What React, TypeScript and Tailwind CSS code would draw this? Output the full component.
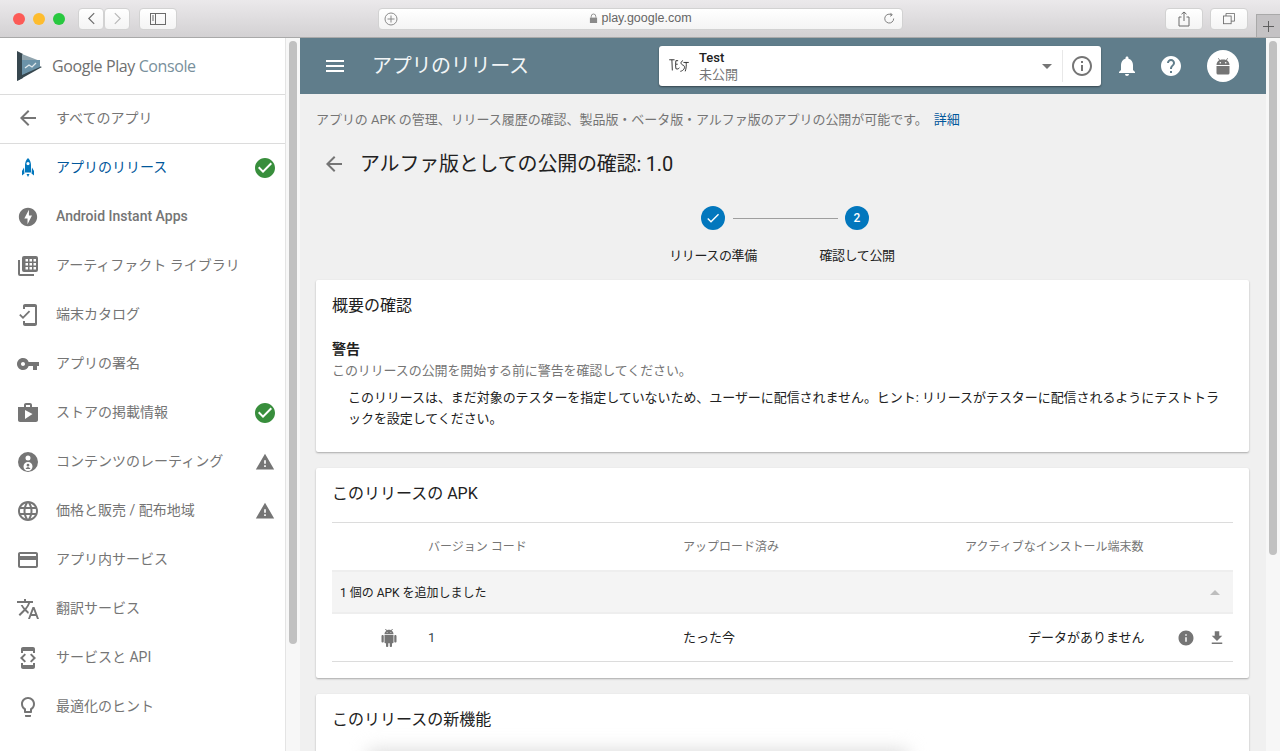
import {
  MdArrowBack,
  MdArrowDropDown,
  MdArrowDropUp,
  MdCheck,
  MdCheckCircle,
  MdCreditCard,
  MdDeveloperMode,
  MdFileDownload,
  MdHelp,
  MdInfo,
  MdInfoOutline,
  MdLanguage,
  MdLightbulbOutline,
  MdMenu,
  MdMobileFriendly,
  MdNotifications,
  MdOfflineBolt,
  MdShop,
  MdTranslate,
  MdVpnKey,
  MdWarning,
} from "react-icons/md";

const font = "font-['Roboto','Noto_Sans_CJK_JP',sans-serif]";

function RocketIcon() {
  return (
    <svg viewBox="0 0 24 24" className="w-6 h-6" fill="#0277bd">
      <path d="M12 2c-2 2-3 4.5-3 7v7.5h6V9c0-2.500-1-5-3-7zm0 7.200a1.600 1.600 0 110-3.200 1.600 1.600 0 010 3.200z" />
      <path d="M8 11.500l-2 3.500v4.500l2.500-2zM16 11.500l2 3.500v4.500l-2.500-2zM10.500 18h3l-1.500 3z" />
    </svg>
  );
}

function LibraryIcon() {
  return (
    <svg viewBox="0 0 24 24" className="w-6 h-6" fill="#757575">
      <path d="M2 6h2v14h14v2H4a2 2 0 01-2-2z" />
      <path d="M8 2h12a2 2 0 012 2v12a2 2 0 01-2 2H8a2 2 0 01-2-2V4a2 2 0 012-2zm1.500 3v2.500H12V5zm4 0v2.500H16V5zm4 0v2.500H20V5zm-8 4v2.500H12V9zm4 0v2.500H16V9zm4 0v2.500H20V9zm-8 4v2.500H12V13zm4 0v2.500H16V13zm4 0v2.500H20V13z" fillRule="evenodd" />
    </svg>
  );
}

function RatingIcon() {
  return (
    <svg viewBox="0 0 24 24" className="w-6 h-6" fill="#757575">
      <path
        fillRule="evenodd"
        d="M12 2a10 10 0 100 20 10 10 0 000-20zm0 3.500a2.500 2.500 0 110 5 2.500 2.500 0 010-5zm0 6.500a4.500 4.500 0 110 9 4.500 4.500 0 010-9zm0 1.800a1.400 1.400 0 100 2.800 1.400 1.400 0 000-2.800zm-2.400 5.200h4.800c-.4-1.100-1.300-1.700-2.400-1.700s-2 .6-2.400 1.700z"
      />
    </svg>
  );
}

function AndroidFull({ className }: { className: string }) {
  return (
    <svg viewBox="0 0 24 24" className={className} fill="#757575">
      <path d="M6 18c0 .55.45 1 1 1h1v3.500c0 .83.67 1.500 1.500 1.500s1.500-.67 1.500-1.500V19h2v3.500c0 .83.67 1.500 1.500 1.500s1.500-.67 1.500-1.500V19h1c.55 0 1-.45 1-1V8H6v10zM3.500 8C2.670 8 2 8.670 2 9.500v7c0 .83.67 1.500 1.500 1.500S5 17.330 5 16.500v-7C5 8.670 4.330 8 3.500 8zm17 0c-.83 0-1.500.67-1.500 1.500v7c0 .83.67 1.500 1.500 1.500s1.500-.67 1.500-1.500v-7c0-.83-.67-1.500-1.500-1.500zm-4.970-5.840l1.300-1.300c.2-.2.2-.51 0-.71-.2-.2-.51-.2-.71 0l-1.480 1.480C13.850 1.230 12.950 1 12 1c-.96 0-1.860.23-2.660.63L7.850.15c-.2-.2-.51-.2-.71 0-.2.2-.2.51 0 .71l1.310 1.310C6.970 3.260 6 5.010 6 7h12c0-1.990-.97-3.750-2.470-4.840zM10 5H9V4h1v1zm5 0h-1V4h1v1z" />
    </svg>
  );
}

function AvatarRobot() {
  return (
    <svg viewBox="0 0 20 20" className="w-5 h-5" fill="#757575">
      <path d="M3.500 9c0-2.200 1.100-3.900 2.700-4.800L4.900 2.300l.6-.4 1.500 2c.9-.4 2-.4 3-.4s2.100 0 3 .4l1.500-2 .6.400-1.300 1.900C15.400 5.100 16.500 6.800 16.500 9z" />
      <path d="M3.500 10h13v7a1.500 1.500 0 01-1.500 1.500H5A1.500 1.500 0 013.500 17z" />
      <circle cx="7.300" cy="6.800" r="0.800" fill="#fff" />
      <circle cx="12.700" cy="6.800" r="0.800" fill="#fff" />
    </svg>
  );
}

function PlayConsoleLogo() {
  return (
    <svg viewBox="0 0 28 30" className="w-7 h-[30px]">
      <path d="M0 0l6 3v24l-6 3z" fill="#37474f" />
      <path d="M0 30l25-14-3-1-16 8z" fill="#37474f" />
      <path d="M5 3l18 7v0H5z" fill="#90a4ae" />
      <path d="M5 9h18v7l-18 8z" fill="#6b92a8" />
      <path d="M8 17l4-3 3 2 4-4" fill="none" stroke="#dfe7eb" strokeWidth="1.300" />
    </svg>
  );
}

type NavItem = {
  label: string;
  icon: React.ReactNode;
  status?: "ok" | "warn";
  active?: boolean;
};

const iconClass = "w-6 h-6 text-[#757575]";

const navItems: NavItem[] = [
  { label: "アプリのリリース", icon: <RocketIcon />, status: "ok", active: true },
  { label: "Android Instant Apps", icon: <MdOfflineBolt className="w-[22px] h-[22px] text-[#757575]" /> },
  { label: "アーティファクト ライブラリ", icon: <LibraryIcon /> },
  { label: "端末カタログ", icon: <MdMobileFriendly className={iconClass} /> },
  { label: "アプリの署名", icon: <MdVpnKey className={iconClass} /> },
  { label: "ストアの掲載情報", icon: <MdShop className={iconClass} />, status: "ok" },
  { label: "コンテンツのレーティング", icon: <RatingIcon />, status: "warn" },
  { label: "価格と販売 / 配布地域", icon: <MdLanguage className={iconClass} />, status: "warn" },
  { label: "アプリ内サービス", icon: <MdCreditCard className={iconClass} /> },
  { label: "翻訳サービス", icon: <MdTranslate className={iconClass} /> },
  { label: "サービスと API", icon: <MdDeveloperMode className={iconClass} /> },
  { label: "最適化のヒント", icon: <MdLightbulbOutline className={iconClass} /> },
];

function Sidebar() {
  return (
    <aside className="w-[300px] shrink-0 flex bg-white">
      <div className="w-[285px] shrink-0 border-r border-[#e4e4e4] box-content">
        <div className="h-[57px] flex items-center pl-[17px] border-b border-[#dcdcdc]">
          <PlayConsoleLogo />
          <span className="ml-[7px] text-[16px] tracking-[-0.4px] text-[#6f6f6f] font-['Open_Sans',sans-serif]">
            Google Play <span className="text-[#78909c]">Console</span>
          </span>
        </div>
        <div className="h-[49px] flex items-center pl-4 pb-[2px] border-b border-[#dcdcdc]">
          <MdArrowBack className="w-6 h-6 text-[#757575]" />
          <span className="ml-4 text-[14px] text-[#757575]">すべてのアプリ</span>
        </div>
        <div className="-mt-px">
          {navItems.map((item) => (
            <div key={item.label} className="h-[49px] flex items-center pl-4 pr-[8px]">
              <span className="w-6 h-6 flex items-center justify-center">{item.icon}</span>
              <span
                className={`ml-4 flex-1 text-[14px] ${
                  item.active ? "text-[#01579b]" : "text-[#757575]"
                } ${item.label.startsWith("Android") ? "font-medium" : ""}`}
              >
                {item.label}
              </span>
              {item.status === "ok" && <MdCheckCircle className="w-6 h-6 text-[#388e3c]" />}
              {item.status === "warn" && <MdWarning className="w-[20px] h-[20px] mx-[2px] text-[#757575]" />}
            </div>
          ))}
        </div>
      </div>
      <Scrollbar thumb="h-[603px]" />
    </aside>
  );
}

function Scrollbar({ thumb }: { thumb: string }) {
  return (
    <div className="flex-1 bg-[#f7f7f7] pt-[3px] flex justify-center">
      <div className={`w-2 rounded bg-[#c1c1c1] ${thumb}`} />
    </div>
  );
}

function SafariBar() {
  const btn = "h-[22px] rounded-[4px] bg-gradient-to-b from-white to-[#f4f4f4] border border-[#d2d2d2] flex items-center justify-center text-[#666]";
  return (
    <div className="h-[38px] shrink-0 relative flex items-center pl-[13px] bg-gradient-to-b from-[#ebe9eb] to-[#d3d1d3] border-b border-[#a9a9a9]">
      <span className="w-3 h-3 rounded-full bg-[#fc5b57]" />
      <span className="w-3 h-3 rounded-full bg-[#fdbc2e] ml-2" />
      <span className="w-3 h-3 rounded-full bg-[#28c83f] ml-2" />
      <div className={`${btn} ml-[13px] w-[26px]`}>
        <svg viewBox="0 0 10 14" className="w-[9px] h-[13px]" fill="none" stroke="#6b6b6b" strokeWidth="1.300">
          <path d="M8 1L2 7l6 6" />
        </svg>
      </div>
      <div className={`${btn} w-[26px]`}>
        <svg viewBox="0 0 10 14" className="w-[9px] h-[13px]" fill="none" stroke="#b8b8b8" strokeWidth="1.300">
          <path d="M2 1l6 6-6 6" />
        </svg>
      </div>
      <div className={`${btn} ml-[9px] w-[38px]`}>
        <svg viewBox="0 0 16 12" className="w-4 h-3" fill="none" stroke="#6b6b6b">
          <rect x="0.500" y="0.500" width="15" height="11" />
          <path d="M5.500 0.500v11M2 3h2M2 5h2M2 7h2" />
        </svg>
      </div>
      <div className={`${btn} ml-[201px] w-[525px] relative text-[#2c2c2c] text-[12.500px] font-['Liberation_Sans',sans-serif]`}>
        <svg viewBox="0 0 14 14" className="absolute left-[5px] top-[3px] w-[14px] h-[14px]" fill="none" stroke="#8a8a8a">
          <circle cx="7" cy="7" r="6" />
          <path d="M7 3.500v7M3.500 7h7" />
        </svg>
        <svg viewBox="0 0 10 12" className="w-[9px] h-[11px] mr-[3px]" fill="#8a8a8a">
          <path d="M1 5h8v6H1z" />
          <path d="M2.500 5V3.500a2.500 2.500 0 015 0V5" fill="none" stroke="#8a8a8a" />
        </svg>
        play.google.com
        <svg viewBox="0 0 14 14" className="absolute right-[6px] top-[3px] w-[13px] h-[13px]" fill="none" stroke="#777">
          <path d="M11.500 7a4.800 4.800 0 11-2-3.800" />
          <path d="M8 1l2 2.200-2.400 1.400" />
        </svg>
      </div>
      <div className={`${btn} ml-[262px] w-[38px]`}>
        <svg viewBox="0 0 12 16" className="w-3 h-4" fill="none" stroke="#6b6b6b">
          <path d="M3.500 6H1v9h10V6H8.500M6 10V1M3.500 3.200L6 1l2.500 2.200" />
        </svg>
      </div>
      <div className={`${btn} ml-[7px] w-[38px]`}>
        <svg viewBox="0 0 14 14" className="w-3 h-3" fill="none" stroke="#6b6b6b">
          <rect x="0.500" y="3.500" width="9" height="9" />
          <path d="M3.500 3.500v-3h10v9h-4" />
        </svg>
      </div>
      <div className="absolute right-0 bottom-0 w-[24px] h-[23px] bg-[#c4c2c4] border-l border-t border-[#a9a9a9] flex items-center justify-center">
        <svg viewBox="0 0 12 12" className="w-[11px] h-[11px]" stroke="#555">
          <path d="M6 0v12M0 6h12" />
        </svg>
      </div>
    </div>
  );
}

function TopBar() {
  return (
    <header className="h-[56px] shrink-0 bg-[#607d8b] flex items-center pl-[23px] pr-[26px] text-white">
      <MdMenu className="w-[24px] h-[24px]" />
      <h1 className="ml-[25px] w-[287px] text-[20px] tracking-[-0.3px] text-[#f2f5f6]">アプリのリリース</h1>
      <div className="w-[442px] h-[40px] rounded-[3px] bg-white shadow-[0_1px_2px_rgba(0,0,0,0.45)] flex items-center pl-[9px]">
        <svg viewBox="0 0 24 18" className="w-[22px] h-[16px]" fill="none" stroke="#222" strokeWidth="1">
          <path d="M1 2h6M4 2l.5 12M8.500 3c-.5 3-.5 6 0 9M8.500 3h2.500M8.500 7h2M8.500 12c2 1 3 0 4-1M16.500 3c-3 1-3 4 0 5s2 6-3 7M17 5h6M20 5c.5 3 0 7-1 10" />
        </svg>
        <div className="ml-[9px] flex-1 leading-[17px]">
          <div className="text-[13px] font-medium text-[#212121]">Test</div>
          <div className="text-[13px] text-[#757575]">未公開</div>
        </div>
        <MdArrowDropDown className="w-[24px] h-[24px] text-[#757575] mr-[3px]" />
        <div className="w-px h-[32px] bg-[#e8e8e8]" />
        <MdInfoOutline className="w-6 h-6 text-[#757575] mx-[7px]" />
      </div>
      <MdNotifications className="ml-[14px] w-6 h-6" />
      <MdHelp className="ml-[20px] w-6 h-6" />
      <div className="ml-[24px] w-8 h-8 rounded-full bg-white flex items-center justify-center">
        <AvatarRobot />
      </div>
    </header>
  );
}

function Stepper() {
  return (
    <div className="ml-[5px] flex flex-col items-center">
      <div className="flex items-center">
        <span className="w-6 h-6 rounded-full bg-[#0277bd] text-white flex items-center justify-center">
          <MdCheck className="w-4 h-4" />
        </span>
        <span className="ml-2 mr-[7px] w-[105px] h-px bg-[#9e9e9e]" />
        <span className="w-6 h-6 rounded-full bg-[#0277bd] text-white text-[12px] font-medium flex items-center justify-center">
          2
        </span>
      </div>
      <div className="mt-[17px] flex text-[13px] tracking-[-0.4px] text-[#212121] leading-[18px]">
        <span className="w-[144px] text-center">リリースの準備</span>
        <span className="w-[144px] text-center">確認して公開</span>
      </div>
    </div>
  );
}

function Card({ children, className }: { children: React.ReactNode; className: string }) {
  return (
    <section className={`bg-white rounded-[2px] px-4 shadow-[0_1px_2px_rgba(0,0,0,0.3)] ${className}`}>
      {children}
    </section>
  );
}

function MainContent() {
  return (
    <main className="flex-1 min-w-0 bg-[#f0f0f0] pl-4 pr-[17px] overflow-hidden">
      <p className="h-[52px] flex items-center text-[13px] tracking-[-0.05px] text-[#757575]">
        アプリの APK の管理、リリース履歴の確認、製品版・ベータ版・アルファ版のアプリの公開が可能です。
        <span className="ml-[6px] text-[#01579b]">詳細</span>
      </p>
      <div className="h-[36px] flex items-center">
        <MdArrowBack className="ml-[6px] w-6 h-6 text-[#757575]" />
        <h2 className="ml-[14px] text-[20px] tracking-[-0.2px] text-[#212121]">アルファ版としての公開の確認: 1.0</h2>
      </div>
      <div className="mt-[24px] h-[74px]">
        <Stepper />
      </div>
      <Card className="h-[172px] pt-[15px]">
        <h3 className="text-[16px] leading-[22px] text-[#212121]">概要の確認</h3>
        <h4 className="mt-[22px] text-[14px] leading-[20px] font-bold text-[#212121]">警告</h4>
        <p className="mt-[3px] text-[13px] tracking-[-0.1px] leading-[17px] text-[#757575]">
          このリリースの公開を開始する前に警告を確認してください。
        </p>
        <p className="mt-[8px] pl-[16px] pr-[8px] text-[13px] tracking-[-0.06px] leading-[21px] text-[#212121] [line-break:loose]">
          このリリースは、まだ対象のテスターを指定していないため、ユーザーに配信されません。ヒント: リリースがテスターに配信されるようにテストトラックを設定してください。
        </p>
      </Card>
      <Card className="mt-4 h-[210px] pt-[15px]">
        <h3 className="text-[16px] leading-[22px] text-[#212121]">このリリースの APK</h3>
        <div className="mt-[17px] h-[48px] border-t border-[#dcdcdc] grid grid-cols-[351px_282px_1fr] items-center text-[12px] text-[#757575]">
          <span className="pl-[96px]">バージョン コード</span>
          <span>アップロード済み</span>
          <span>アクティブなインストール端末数</span>
        </div>
        <div className="h-[44px] bg-[#f4f4f4] border-y-2 border-[#eeeeee] pl-2 pr-[6px] pt-px flex items-center justify-between text-[12px] text-[#212121]">
          <span>1 個の APK を追加しました</span>
          <MdArrowDropUp className="w-6 h-6 text-[#bdbdbd]" />
        </div>
        <div className="h-[48px] border-b border-[#dcdcdc] flex items-center text-[13px] text-[#212121]">
          <AndroidFull className="ml-[48px] w-[18px] h-[18px]" />
          <span className="ml-[30px] w-[255px] text-[#37474f]">1</span>
          <span className="w-[345px]">たった今</span>
          <span className="w-[149px]">データがありません</span>
          <MdInfo className="w-[18px] h-[18px] text-[#757575]" />
          <MdFileDownload className="ml-[13px] w-[18px] h-[18px] text-[#757575]" />
        </div>
      </Card>
      <Card className="mt-4 h-[120px] pt-[15px] overflow-hidden">
        <h3 className="text-[16px] leading-[22px] text-[#212121]">このリリースの新機能</h3>
        <div className="mt-[19px] ml-[36px] w-[540px] h-[24px] bg-[#dadada] blur-[9px]" />
      </Card>
    </main>
  );
}

export default function App() {
  return (
    <div className={`w-[1280px] h-[751px] overflow-hidden flex flex-col ${font}`}>
      <SafariBar />
      <div className="flex-1 min-h-0 flex">
        <Sidebar />
        <div className="flex-1 min-w-0 flex flex-col">
          <div className="flex flex-1 min-h-0">
            <div className="w-[966px] shrink-0 flex flex-col">
              <TopBar />
              <MainContent />
            </div>
            <Scrollbar thumb="h-[514px]" />
          </div>
        </div>
      </div>
    </div>
  );
}
